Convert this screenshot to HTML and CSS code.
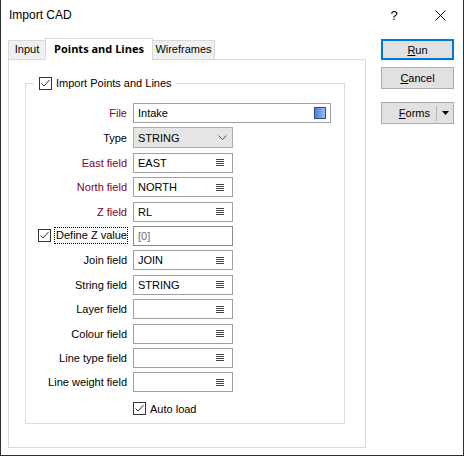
FILE: index.html
```html
<!DOCTYPE html>
<html>
<head>
<meta charset="utf-8">
<title>Import CAD</title>
<link rel="stylesheet" href="styles.css">
</head>
<body>
<div class="window">
  <div class="titlebar">
    <span class="title">Import CAD</span>
    <span class="cap-btn help">?</span>
    <span class="cap-btn close">
      <svg width="11" height="11" viewBox="0 0 11 11"><path d="M0.5 0.5 L10.5 10.5 M10.5 0.5 L0.5 10.5" stroke="#000" stroke-width="1" fill="none"/></svg>
    </span>
  </div>
  <div class="main">
    <div class="tabs-area">
      <div class="tabstrip">
        <div class="tab tab-input">Input</div>
        <div class="tab tab-active">Points and Lines</div>
        <div class="tab tab-wire">Wireframes</div>
      </div>
      <div class="panel">
        <fieldset class="group">
          <legend class="legend">
            <span class="check"><svg width="13" height="13" viewBox="0 0 13 13"><rect x="0.5" y="0.5" width="12" height="12" fill="#fff" stroke="#333"/><path d="M2.5 6.5 L5 9 L10.5 3" stroke="#333" fill="none"/></svg></span>
            <span>Import Points and Lines</span>
          </legend>
          <div class="form">
            <div class="lbl req">File</div>
            <div class="field wide">Intake<span class="swatch"></span></div>

            <div class="lbl">Type</div>
            <div class="combo">STRING<svg class="chev" width="9" height="5" viewBox="0 0 9 5"><path d="M0.5 0.5 L4.5 4.5 L8.5 0.5" stroke="#555" fill="none"/></svg></div>

            <div class="lbl req">East field</div>
            <div class="field">EAST<svg class="menu" width="8" height="7" viewBox="0 0 8 7"><path d="M0 0.5 H8 M0 2.5 H8 M0 4.5 H8 M0 6.5 H8" stroke="#444"/></svg></div>

            <div class="lbl req">North field</div>
            <div class="field">NORTH<svg class="menu" width="8" height="7" viewBox="0 0 8 7"><path d="M0 0.5 H8 M0 2.5 H8 M0 4.5 H8 M0 6.5 H8" stroke="#444"/></svg></div>

            <div class="lbl req">Z field</div>
            <div class="field">RL<svg class="menu" width="8" height="7" viewBox="0 0 8 7"><path d="M0 0.5 H8 M0 2.5 H8 M0 4.5 H8 M0 6.5 H8" stroke="#444"/></svg></div>

            <div class="lbl chk-lbl">
              <span class="check"><svg width="13" height="13" viewBox="0 0 13 13"><rect x="0.5" y="0.5" width="12" height="12" fill="#fff" stroke="#333"/><path d="M2.5 6.5 L5 9 L10.5 3" stroke="#333" fill="none"/></svg></span>
              <span class="focus">Define Z value</span>
            </div>
            <div class="field dim">[0]</div>

            <div class="lbl">Join field</div>
            <div class="field">JOIN<svg class="menu" width="8" height="7" viewBox="0 0 8 7"><path d="M0 0.5 H8 M0 2.5 H8 M0 4.5 H8 M0 6.5 H8" stroke="#444"/></svg></div>

            <div class="lbl">String field</div>
            <div class="field">STRING<svg class="menu" width="8" height="7" viewBox="0 0 8 7"><path d="M0 0.5 H8 M0 2.5 H8 M0 4.5 H8 M0 6.5 H8" stroke="#444"/></svg></div>

            <div class="lbl">Layer field</div>
            <div class="field"><svg class="menu" width="8" height="7" viewBox="0 0 8 7"><path d="M0 0.5 H8 M0 2.5 H8 M0 4.5 H8 M0 6.5 H8" stroke="#444"/></svg></div>

            <div class="lbl">Colour field</div>
            <div class="field"><svg class="menu" width="8" height="7" viewBox="0 0 8 7"><path d="M0 0.5 H8 M0 2.5 H8 M0 4.5 H8 M0 6.5 H8" stroke="#444"/></svg></div>

            <div class="lbl">Line type field</div>
            <div class="field"><svg class="menu" width="8" height="7" viewBox="0 0 8 7"><path d="M0 0.5 H8 M0 2.5 H8 M0 4.5 H8 M0 6.5 H8" stroke="#444"/></svg></div>

            <div class="lbl">Line weight field</div>
            <div class="field"><svg class="menu" width="8" height="7" viewBox="0 0 8 7"><path d="M0 0.5 H8 M0 2.5 H8 M0 4.5 H8 M0 6.5 H8" stroke="#444"/></svg></div>

            <div class="autoload">
              <span class="check"><svg width="13" height="13" viewBox="0 0 13 13"><rect x="0.5" y="0.5" width="12" height="12" fill="#fff" stroke="#333"/><path d="M2.5 6.5 L5 9 L10.5 3" stroke="#333" fill="none"/></svg></span>
              <span>Auto load</span>
            </div>
          </div>
        </fieldset>
      </div>
    </div>
    <div class="buttons">
      <div class="btn btn-default"><u>R</u>un</div>
      <div class="btn btn-cancel"><u>C</u>ancel</div>
      <div class="btn btn-forms">
        <span class="forms-text"><u>F</u>orms</span>
        <span class="sep"></span>
        <span class="arrow"><svg width="7" height="4" viewBox="0 0 7 4"><path d="M0 0 H7 L3.5 4 Z" fill="#000"/></svg></span>
      </div>
    </div>
  </div>
</div>
</body>
</html>
```

FILE: styles.css
```css
* { box-sizing: border-box; }

body {
  margin: 0;
  font-family: "Liberation Sans", Arial, sans-serif;
  font-size: 11px;
  color: #000;
  background: #fff;
}

.window {
  width: 464px;
  height: 456px;
  border: 1px solid #2e2e2e;
  border-top: none;
  background: #fff;
  display: flex;
  flex-direction: column;
}

.titlebar {
  height: 31px;
  display: flex;
  align-items: center;
  padding-left: 8px;
  font-size: 12px;
}

.title { flex: 1; padding-bottom: 1px; }

.cap-btn {
  width: 46px;
  height: 30px;
  display: flex;
  align-items: center;
  justify-content: center;
}

.help { font-size: 13px; }

.main {
  display: flex;
  padding: 7px 0 0 7px;
}

.tabs-area { width: 358px; }

.tabstrip {
  display: flex;
  align-items: flex-end;
  height: 21px;
}

.tab {
  height: 19px;
  border: 1px solid #d9d9d9;
  border-bottom: none;
  background: #f0f0f0;
  text-align: center;
  line-height: 17px;
  white-space: nowrap;
}

.tab-input { width: 38px; }

.tab-active {
  width: 108px;
  height: 22px;
  margin-left: -1px;
  margin-bottom: -1px;
  background: #fff;
  font-family: "Open Sans", sans-serif;
  font-weight: bold;
  line-height: 19px;
  position: relative;
  z-index: 1;
}

.tab-wire { width: 63px; margin-left: -1px; }

.panel {
  height: 389px;
  border: 1px solid #d9d9d9;
  padding: 17px 20px 0 16px;
}

.group {
  margin: 0;
  padding: 0 0 8px 0;
  border: 1px solid #dcdcdc;
  width: 320px;
}

.legend {
  margin-left: 8px;
  padding: 0 4px 0 5px;
  height: 13px;
  display: flex;
  align-items: center;
  gap: 4px;
  line-height: 13px;
}

.check { display: inline-flex; width: 13px; height: 13px; }

.form {
  display: grid;
  grid-template-columns: 101px 1fr;
  column-gap: 6px;
  row-gap: 4.4px;
  padding-top: 13px;
}

.lbl {
  display: flex;
  align-items: center;
  justify-content: flex-end;
  white-space: nowrap;
}

.req { color: #80002e; }

.field, .combo {
  width: 100px;
  height: 20px;
  border: 1px solid #a0a0a0;
  background: #fff;
  display: flex;
  align-items: center;
  padding: 0 8px 0 4px;
  white-space: nowrap;
}

.field.wide { width: 198px; padding-right: 4px; }

.swatch {
  margin-left: auto;
  width: 12px;
  height: 12px;
  border: 1px solid #2f4f7f;
  background: linear-gradient(to right, #4b7fe0, #9ab9f5);
}

.menu { margin-left: auto; }

.combo {
  height: 21px;
  background: #e5e5e5;
  border-color: #adadad;
  padding-right: 5px;
}

.chev { margin-left: auto; }

.dim { color: #6d6d6d; border-color: #8a8a8a; }

.chk-lbl { gap: 3px; margin-right: -1px; }

.focus {
  border: 1px dotted #000;
  padding: 0 0 0 1px;
  line-height: 15px;
}

.autoload {
  grid-column: 2;
  display: flex;
  align-items: center;
  gap: 4px;
  margin-top: 5.6px;
  height: 13px;
}

.buttons {
  margin-left: 15px;
  width: 73px;
  display: flex;
  flex-direction: column;
  padding-top: 1px;
}

.btn {
  height: 22px;
  border: 1px solid #adadad;
  background: #e1e1e1;
  display: flex;
  align-items: center;
  justify-content: center;
}

.btn-default {
  height: 21px;
  border: 2px solid #0078d7;
}

.btn-cancel { margin-top: 7px; }

.btn-forms {
  margin-top: 13px;
  justify-content: flex-end;
}

.forms-text { padding-right: 6px; }

.sep {
  width: 1px;
  height: 15px;
  background: #b5b5b5;
}

.arrow {
  width: 16px;
  display: flex;
  align-items: center;
  justify-content: center;
}
```
